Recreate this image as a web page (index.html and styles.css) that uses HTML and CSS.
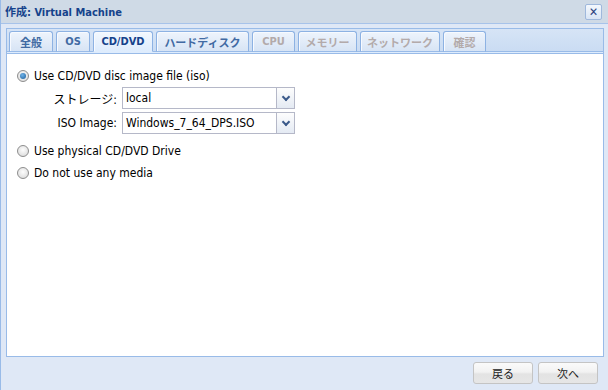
FILE: index.html
```html
<!DOCTYPE html>
<html lang="ja">
<head>
  <meta charset="UTF-8" />
  <title>作成: Virtual Machine</title>
  <link rel="stylesheet" href="styles.css">
</head>
<body>

  <div class="window">
    <div class="win-header">
      <span class="win-title">作成: Virtual Machine</span>
      <span class="win-close">&#x2715;</span>
    </div>

    <div class="win-body">
      <div class="tabpanel">
        <div class="tabstrip">
          <span class="tab t-general">全般</span>
          <span class="tab t-os">OS</span>
          <span class="tab t-cd active">CD/DVD</span>
          <span class="tab t-disk">ハードディスク</span>
          <span class="tab t-cpu disabled">CPU</span>
          <span class="tab t-mem disabled">メモリー</span>
          <span class="tab t-net disabled">ネットワーク</span>
          <span class="tab t-conf disabled">確認</span>
        </div>
        <div class="strip-spacer"></div>

        <div class="tab-body">
          <div class="radio-row">
            <span class="radio checked"></span>
            <span>Use CD/DVD disc image file (iso)</span>
          </div>

          <div class="field-group">
            <div class="field-row">
              <label class="field-label">ストレージ:</label>
              <div class="combo">
                <span class="combo-text">local</span>
                <span class="combo-trigger"></span>
              </div>
            </div>

            <div class="field-row">
              <label class="field-label">ISO Image:</label>
              <div class="combo">
                <span class="combo-text">Windows_7_64_DPS.ISO</span>
                <span class="combo-trigger"></span>
              </div>
            </div>
          </div>

          <div class="radio-row">
            <span class="radio"></span>
            <span>Use physical CD/DVD Drive</span>
          </div>
          <div class="radio-row">
            <span class="radio"></span>
            <span>Do not use any media</span>
          </div>
        </div>
      </div>

      <div class="win-footer">
        <button class="btn">戻る</button>
        <button class="btn">次へ</button>
      </div>
    </div>
  </div>

</body>
</html>
```

FILE: styles.css
```css
* { box-sizing: border-box; margin: 0; padding: 0; }

body {
  width: 608px;
  height: 390px;
  overflow: hidden;
  font-family: 'DejaVu Sans Condensed', 'DejaVu Sans', 'Noto Sans CJK JP', sans-serif;
  font-size: 11px;
  color: #000;
  background: #dfe8f6;
}

.window {
  height: 390px;
  border-left: 1px solid #99bbe8;
  background: #dfe8f6;
}

.win-header {
  height: 24px;
  display: flex;
  align-items: center;
  justify-content: space-between;
  padding: 0 6px 1px 4px;
  background: #cfdae6;
  border-bottom: 1px solid #a7c3ea;
}

.win-title {
  font-weight: bold;
  font-size: 11px;
  color: #15428b;
}

.win-close {
  width: 17px;
  height: 16px;
  margin-top: 2px;
  display: flex;
  align-items: center;
  justify-content: center;
  font-size: 12px;
  color: #2b3f7e;
  background: linear-gradient(#f4f8fd, #d9e5f5);
  border: 1px solid #9fb8dc;
  border-radius: 2px;
}

.win-body {
  padding: 4px 4px 0 5px;
}

.tabpanel {
  border: 1px solid #99bbe8;
  background: #fff;
}

.tabstrip {
  height: 23px;
  display: flex;
  align-items: flex-end;
  gap: 3px;
  padding: 0 0 0 2px;
  background: linear-gradient(#d6e4f6, #cadcf3);
  border-bottom: 1px solid #99bbe8;
}

.tab {
  height: 21px;
  display: flex;
  align-items: center;
  justify-content: center;
  margin-bottom: -1px;
  font-weight: bold;
  font-size: 11px;
  color: #416aa3;
  background: linear-gradient(#eef4fc, #d7e4f5);
  border: 1px solid #8db2e3;
  border-bottom: 1px solid #99bbe8;
  border-radius: 3px 3px 0 0;
  box-shadow: inset 1px 1px 0 #f7faff;
}

.tab.active {
  color: #15428b;
  background: linear-gradient(#f3f8fe, #deecfd);
  border-bottom-color: #deecfd;
}

.tab.disabled {
  color: #b3aaaa;
}

.t-general { width: 44px; }
.t-os { width: 34px; }
.t-cd { width: 60px; }
.t-disk { width: 93px; }
.t-cpu { width: 43px; }
.t-mem { width: 59px; }
.t-net { width: 80px; }
.t-conf { width: 43px; }

.strip-spacer {
  height: 2px;
  background: #deecfd;
  border-bottom: 1px solid #99bbe8;
}

.tab-body {
  height: 302px;
  padding: 11px 10px;
  font-size: 12px;
}

.radio-row {
  height: 22px;
  display: flex;
  align-items: center;
  gap: 5px;
}

.radio {
  width: 12px;
  height: 12px;
  border-radius: 50%;
  border: 1px solid #8d8d8d;
  background: radial-gradient(circle at 50% 40%, #fdfdfd, #d6d6d6);
  display: flex;
  align-items: center;
  justify-content: center;
}

.radio.checked::after {
  content: "";
  width: 6px;
  height: 6px;
  border-radius: 50%;
  background: radial-gradient(circle at 40% 35%, #6fb2e8, #1a5d9a);
}

.field-group {
  display: flex;
  flex-direction: column;
  gap: 3px;
  padding-bottom: 6px;
}

.field-row {
  display: flex;
  align-items: center;
}

.field-label {
  width: 105px;
  text-align: right;
  padding-right: 5px;
}

.combo {
  width: 173px;
  height: 22px;
  display: flex;
  border: 1px solid #b5b8c8;
  background: #fff;
}

.combo-text {
  flex: 1;
  padding-left: 3px;
  display: flex;
  align-items: center;
}

.combo-trigger {
  width: 18px;
  background: linear-gradient(#fdfdfd, #e4eaf3);
  border-left: 1px solid #b5b8c8;
  display: flex;
  align-items: center;
  justify-content: center;
}

.combo-trigger::after {
  content: "";
  width: 4px;
  height: 4px;
  margin-top: -3px;
  border-right: 2px solid #3b5a8a;
  border-bottom: 2px solid #3b5a8a;
  transform: rotate(45deg);
}

.win-footer {
  display: flex;
  justify-content: flex-end;
  gap: 5px;
  padding: 5px 6px 0 0;
}

.btn {
  width: 60px;
  height: 22px;
  font-family: 'DejaVu Sans', 'Noto Sans CJK JP', sans-serif;
  font-size: 11px;
  color: #222;
  background: linear-gradient(#fafafa 0%, #f2f2f2 45%, #e3e3e3 55%, #e6e6e6 100%);
  border: 1px solid #c4c4c4;
  border-radius: 3px;
}
```
